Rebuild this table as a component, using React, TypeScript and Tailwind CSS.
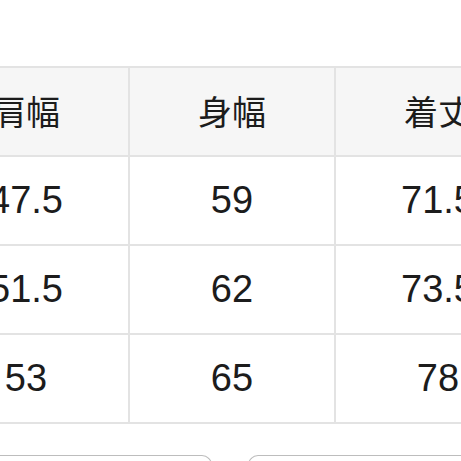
const headers = ["肩幅", "身幅", "着丈"];
const rows = [
  ["47.5", "59", "71.5"],
  ["51.5", "62", "73.5"],
  ["53", "65", "78"],
];

export default function App() {
  return (
    <div
      className="w-[461px] h-[461px] overflow-hidden bg-white text-[#1c1c1c]"
      style={{ fontFamily: '"Liberation Sans", "Noto Sans CJK JP", sans-serif' }}
    >
      <div className="pt-[66px]">
        <div className="ml-[-78px] w-[620px] grid grid-cols-[204px_204px_204px] auto-rows-[87px] gap-[2px] p-[2px] bg-[#e3e3e3]">
          {headers.map((h) => (
            <div key={h} className="bg-[#f6f6f6] flex items-center justify-center pt-[3px] text-[34px]">
              {h}
            </div>
          ))}
          {rows.flat().map((v, i) => (
            <div key={i} className="bg-white flex items-center justify-center text-[38px]">
              {v}
            </div>
          ))}
        </div>
        <div className="mt-[31px] flex justify-between">
          <div className="ml-[-20px] w-[232px] h-[20px] border-t-[1.5px] border-r-[1.5px] border-[#bdbdbd] rounded-tr-[10px]" />
          <div className="mr-[-20px] w-[233px] h-[20px] border-t-[1.5px] border-l-[1.5px] border-[#bdbdbd] rounded-tl-[10px]" />
        </div>
      </div>
    </div>
  );
}
